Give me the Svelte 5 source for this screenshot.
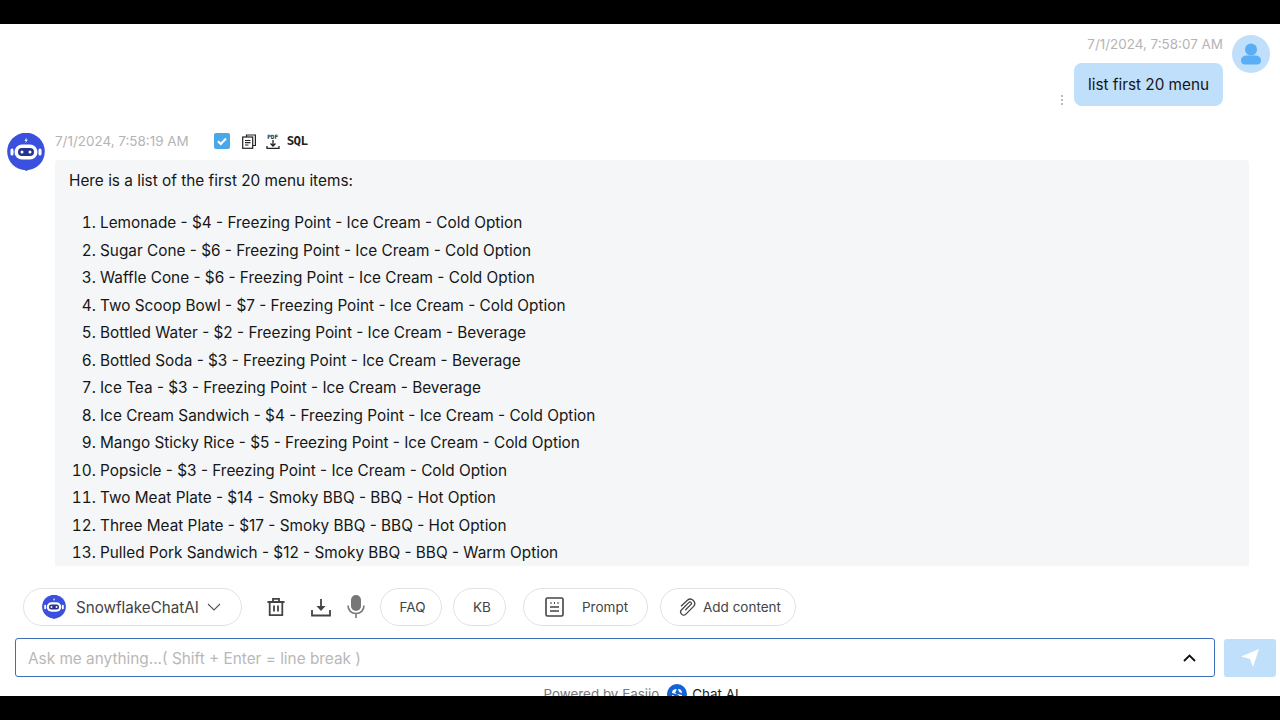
<script lang="ts">
  const items = [
    'Lemonade - $4 - Freezing Point - Ice Cream - Cold Option',
    'Sugar Cone - $6 - Freezing Point - Ice Cream - Cold Option',
    'Waffle Cone - $6 - Freezing Point - Ice Cream - Cold Option',
    'Two Scoop Bowl - $7 - Freezing Point - Ice Cream - Cold Option',
    'Bottled Water - $2 - Freezing Point - Ice Cream - Beverage',
    'Bottled Soda - $3 - Freezing Point - Ice Cream - Beverage',
    'Ice Tea - $3 - Freezing Point - Ice Cream - Beverage',
    'Ice Cream Sandwich - $4 - Freezing Point - Ice Cream - Cold Option',
    'Mango Sticky Rice - $5 - Freezing Point - Ice Cream - Cold Option',
    'Popsicle - $3 - Freezing Point - Ice Cream - Cold Option',
    'Two Meat Plate - $14 - Smoky BBQ - BBQ - Hot Option',
    'Three Meat Plate - $17 - Smoky BBQ - BBQ - Hot Option',
    'Pulled Pork Sandwich - $12 - Smoky BBQ - BBQ - Warm Option'
  ];
</script>

{#snippet botIcon(size: number)}
  <svg width={size} height={size} viewBox="0 0 38 38">
    <circle cx="19" cy="18.500" r="18.800" fill="#3b50dc" />
    <path d="M14 35l5.500 3 4.500-3z" fill="#3b50dc" />
    <path d="M19.500 4.500l-2 3.200h1.500l-.7 2.500 2.500-3.400h-1.500z" fill="#fff" />
    <rect x="3.500" y="15.500" width="3" height="7" rx="1.500" fill="#fff" />
    <rect x="31.500" y="15.500" width="3" height="7" rx="1.500" fill="#fff" />
    <rect x="7.500" y="11.500" width="23" height="15" rx="7.500" fill="#fff" />
    <rect x="11" y="15" width="16" height="8" rx="4" fill="#26348f" />
    <circle cx="15" cy="19" r="1.500" fill="#fff" />
    <circle cx="23" cy="19" r="1.500" fill="#fff" />
  </svg>
{/snippet}

<div class="page">
  <div class="bar"></div>
  <main class="screen">
    <section class="chat">
      <div class="user-row">
        <div class="user-col">
          <span class="time">7/1/2024, 7:58:07 AM</span>
          <div class="bubble-row">
            <span class="dots"><i></i><i></i><i></i></span>
            <div class="bubble">list first 20 menu</div>
          </div>
        </div>
        <div class="user-avatar">
          <svg width="38" height="38" viewBox="0 0 38 38">
            <circle cx="19" cy="14.500" r="6" fill="#5aaef5" />
            <path d="M9 25.500c0-3.300 2.700-5 6-5h8c3.300 0 6 1.700 6 5 0 2.500-1.500 4-4 4H13c-2.500 0-4-1.500-4-4z" fill="#5aaef5" />
          </svg>
        </div>
      </div>

      <div class="bot-row">
        <div class="bot-avatar">{@render botIcon(38)}</div>
        <div class="bot-col">
          <div class="bot-head">
            <span class="time">7/1/2024, 7:58:19 AM</span>
            <div class="bot-tools">
              <svg width="16" height="16" viewBox="0 0 16 16">
                <rect width="16" height="16" rx="2" fill="#4aa8e8" />
                <path d="M4 8.200l2.800 2.800L12 5.500" fill="none" stroke="#fff" stroke-width="2" />
              </svg>
              <svg width="14" height="15" viewBox="0 0 14 15" fill="none" stroke="#222" stroke-width="1.200">
                <path d="M4.500 3V1h8.900v10.500h-2.500" />
                <rect x=".7" y="3" width="10" height="11.300" />
                <path d="M3 6.500h5.500M3 8.700h5.500M3 11h3.500" />
              </svg>
              <div class="pdf">
                <span>PDF</span>
                <svg width="14" height="9" viewBox="0 0 14 9" fill="none" stroke="#222" stroke-width="1.300">
                  <path d="M7 0v5.500M4.500 3.500L7 6l2.500-2.500M1 6v2.300h12V6" />
                </svg>
              </div>
              <span class="sql">SQL</span>
            </div>
          </div>
          <div class="answer">
            <p>Here is a list of the first 20 menu items:</p>
            <ol>
              {#each items as item}
                <li>{item}</li>
              {/each}
            </ol>
          </div>
        </div>
      </div>
    </section>

    <div class="toolbar">
      <button class="pill model">
        {@render botIcon(24)}
        <span>SnowflakeChatAI</span>
        <svg width="14" height="8" viewBox="0 0 14 8" fill="none" stroke="#555" stroke-width="1.100">
          <path d="M1 1l6 6 6-6" />
        </svg>
      </button>
      <div class="icons">
        <svg class="trash" width="20" height="20" viewBox="0 0 20 20" fill="none" stroke="#444" stroke-width="1.800">
          <path d="M1.500 5h17M7 5V1.800h6V5M3.700 5v13.200h12.600V5M8 8.500v6M12 8.500v6" />
        </svg>
        <svg class="down" width="20" height="19" viewBox="0 0 20 19" fill="none" stroke="#444" stroke-width="1.800">
          <path d="M10 1v10" />
          <path d="M5.500 8h9L10 13z" fill="#444" stroke="none" />
          <path d="M1 12v5.500h18V12" />
        </svg>
        <svg class="mic" width="18" height="24" viewBox="0 0 18 24">
          <rect x="4" y="0" width="10" height="16" rx="5" fill="#777" />
          <path d="M1 10.500c0 5 3.500 8 8 8s8-3 8-8M9 18.500V23" fill="none" stroke="#777" stroke-width="1.600" />
        </svg>
      </div>
      <button class="pill faq">FAQ</button>
      <button class="pill kb">KB</button>
      <button class="pill prompt">
        <svg width="19" height="20" viewBox="0 0 19 20" fill="none" stroke="#444" stroke-width="1.600">
          <rect x="1" y="1" width="17" height="18" rx="1.500" />
          <path d="M5 10h9M5 14h9" />
          <path d="M5.500 6h1M9 6h1M12.500 6h1" stroke-width="1.800" />
        </svg>
        <span>Prompt</span>
      </button>
      <button class="pill add">
        <svg width="18" height="18" viewBox="0 0 18 18" fill="none" stroke="#444" stroke-width="1.300">
          <path d="M7.200 12.200l5.800-5.800a1.400 1.400 0 0 0-2-2L3.600 11.800a3 3 0 0 0 4.300 4.300l7.700-7.700a4.400 4.400 0 0 0-6.200-6.200L3 8.200" />
        </svg>
        <span>Add content</span>
      </button>
    </div>

    <div class="input-row">
      <div class="input">
        <span class="placeholder">Ask me anything...( Shift + Enter = line break )</span>
        <svg width="13" height="8" viewBox="0 0 13 8" fill="none" stroke="#111" stroke-width="1.800">
          <path d="M1 7l5.500-5.500L12 7" />
        </svg>
      </div>
      <button class="send" aria-label="Send">
        <svg width="18" height="18" viewBox="0 0 18 18">
          <path d="M0 7.500L18 0l-6 18-3-8z" fill="#fff" />
        </svg>
      </button>
    </div>

    <footer class="powered">
      <span>Powered by Easiio</span>
      <svg width="20" height="20" viewBox="0 0 20 20">
        <circle cx="10" cy="10" r="10" fill="#1463d6" />
        <path d="M5 9c0-3 2-4 4.500-4 0 1.500-.5 3-2 3.500 1 .5 2 .5 2 1.500zM15 11c0 3-2 4-4.500 4 0-1.500.5-3 2-3.500-1-.5-2-.5-2-1.500zM11 5c2.500 0 4 1.500 4 4-1.500 0-3.500-1-4-4zM9 15c-2.500 0-4-1.500-4-4 1.500 0 3.500 1 4 4z" fill="#fff" />
      </svg>
      <b>Chat AI</b>
    </footer>
  </main>
  <div class="bar"></div>
</div>

<style>
  :global(body) {
    margin: 0;
    background: #000;
  }

  .page {
    display: flex;
    flex-direction: column;
    height: 720px;
    font-family: Inter, "Liberation Sans", sans-serif;
    color: #161616;
  }

  .bar {
    flex: 0 0 24px;
    background: #000;
  }

  .screen {
    flex: 1;
    min-height: 0;
    overflow: hidden;
    background: #fff;
    display: flex;
    flex-direction: column;
  }

  .chat {
    height: 542px;
    flex: none;
    overflow: hidden;
  }

  .user-row {
    display: flex;
    justify-content: flex-end;
    gap: 9px;
    padding: 11px 10px 0 0;
  }

  .user-col {
    display: flex;
    flex-direction: column;
    align-items: flex-end;
  }

  .time {
    font-size: 13.45px;
    line-height: 18px;
    color: #b4b4b4;
  }

  .bubble-row {
    display: flex;
    align-items: flex-end;
    gap: 11px;
    margin-top: 10px;
  }

  .dots {
    display: flex;
    flex-direction: column;
    gap: 2px;
    padding-bottom: 1px;
  }

  .dots i {
    width: 2px;
    height: 2px;
    background: #bbb;
  }

  .bubble {
    background: #bfdffb;
    border-radius: 8px;
    padding: 0 14px;
    height: 43px;
    line-height: 43px;
    font-size: 15.3px;
  }

  .user-avatar {
    width: 38px;
    height: 38px;
    border-radius: 50%;
    background: #bfdffb;
  }

  .bot-row {
    display: flex;
    gap: 10px;
    padding: 27px 31px 0 7px;
  }

  .bot-avatar {
    flex: none;
    height: 38px;
  }

  .bot-col {
    flex: 1;
  }

  .bot-head {
    display: flex;
    align-items: center;
    gap: 25px;
    height: 16px;
    padding: 0 0 11px;
  }

  .bot-tools {
    display: flex;
    align-items: center;
    gap: 12px;
  }

  .pdf {
    display: flex;
    flex-direction: column;
    align-items: center;
    width: 14px;
    margin-left: -2px;
  }

  .pdf span {
    font: 700 6px/7px "DejaVu Sans Mono", monospace;
    letter-spacing: 0;
    color: #222;
  }

  .sql {
    font: 700 12.5px/16px "DejaVu Sans Mono", monospace;
    color: #222;
    letter-spacing: -0.6px;
    margin-left: -5px;
  }

  .answer {
    background: #f4f6f8;
    border-radius: 4px;
    padding: 11px 14px;
    font-size: 15.35px;
    line-height: 20px;
  }

  .answer p {
    margin: 0 0 18px;
  }

  .answer ol {
    margin: 0;
    padding: 0 0 0 31px;
  }

  .answer li {
    line-height: 27.5px;
  }

  .toolbar {
    display: flex;
    align-items: center;
    height: 38px;
    margin-top: 22px;
    padding-left: 23px;
    flex: none;
  }

  .pill {
    display: flex;
    align-items: center;
    height: 38px;
    box-sizing: border-box;
    border: 1px solid #e2e2e2;
    border-radius: 19px;
    background: #fff;
    font-family: inherit;
    font-size: 13.5px;
    color: #444;
    padding: 0;
  }

  .model {
    width: 219px;
    padding-left: 18px;
    gap: 10px;
    font-size: 15.2px;
  }

  .model svg:last-child {
    margin-left: -2px;
  }

  .icons {
    display: flex;
    align-items: center;
    margin-left: 24px;
  }

  .down {
    margin-left: 25px;
  }

  .mic {
    margin-left: 16px;
  }

  .faq {
    width: 62px;
    justify-content: center;
    margin-left: 15px;
    padding-left: 3px;
  }

  .kb {
    width: 53px;
    justify-content: center;
    margin-left: 11px;
    padding-left: 5px;
  }

  .prompt {
    width: 125px;
    padding-left: 21px;
    gap: 18px;
    margin-left: 17px;
  }

  .add {
    width: 136px;
    padding-left: 17px;
    gap: 7px;
    margin-left: 12px;
  }

  .input-row {
    display: flex;
    align-items: center;
    gap: 9px;
    padding-left: 15px;
    margin-top: 12px;
    flex: none;
  }

  .input {
    width: 1200px;
    height: 39px;
    box-sizing: border-box;
    border: 1px solid #3f6fba;
    border-radius: 3px;
    display: flex;
    align-items: center;
    justify-content: space-between;
    padding: 0 18px 0 12px;
  }

  .placeholder {
    font-size: 15.35px;
    color: #b8b8b8;
    margin-top: 2px;
  }

  .send {
    width: 52px;
    height: 38px;
    border: none;
    border-radius: 3px;
    background: #bfdffb;
    display: flex;
    align-items: center;
    justify-content: center;
    padding: 0;
  }

  .powered {
    display: flex;
    align-items: center;
    justify-content: center;
    gap: 8px;
    margin-top: 7px;
    padding-left: 2px;
    font-size: 13.4px;
    color: #777;
    flex: none;
  }

  .powered b {
    font-weight: 400;
    color: #222;
    margin-left: -3px;
  }
</style>
